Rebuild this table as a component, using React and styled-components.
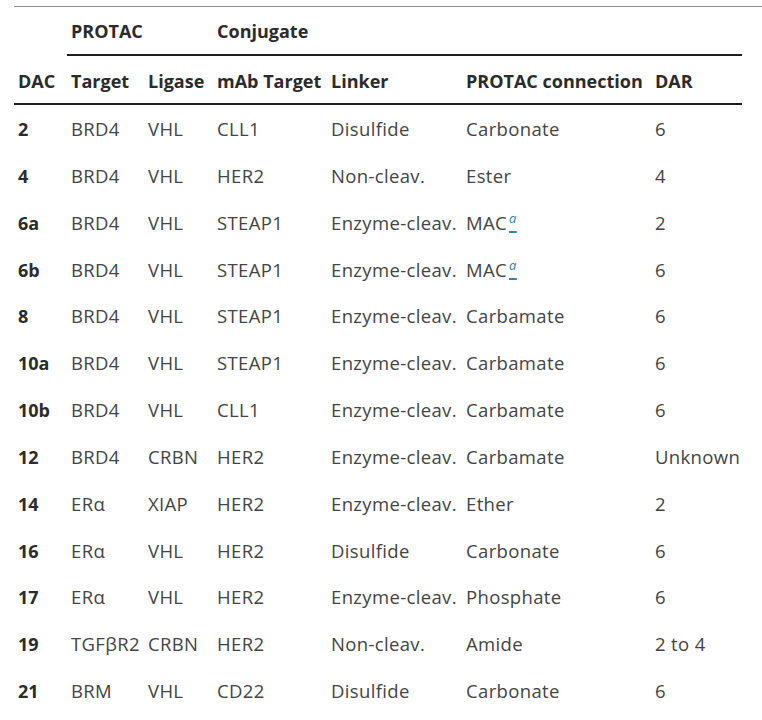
import React from "react";
import styled, { createGlobalStyle } from "styled-components";

const Global = createGlobalStyle`
  html, body { margin: 0; padding: 0; background: #fff; }
  body { font-family: "Open Sans", "Noto Sans", sans-serif; }
`;

const Wrap = styled.div`
  margin: 6px 0 0 14px;
  border-top: 1px solid #8c8c8c;
`;

const Table = styled.table`
  border-collapse: collapse;
  table-layout: fixed;
  width: 728px;
  color: #474747;
`;

const Th = styled.th`
  text-align: left;
  font-size: 18px;
  font-weight: 700;
  color: #2b2b2b;
  padding: 12px 0 10px 4px;
  line-height: 25px;
  white-space: nowrap;
  border-bottom: ${(p) => (p.$rule ? "2px solid #1f1f1f" : "none")};
`;

const ColTh = styled(Th)`
  padding: 13px 0 9px 4px;
`;

const GroupRow = styled.tr``;

const HeadRow = styled.tr`
  border-bottom: 2px solid #1f1f1f;
`;

const Td = styled.td`
  padding: 12px 0 10px 4px;
  line-height: 24.85px;
  white-space: nowrap;
  font-size: ${(p) => (p.$bold ? "18px" : "18.5px")};
  letter-spacing: ${(p) => (p.$bold ? "0" : "0.35px")};
  font-weight: ${(p) => (p.$bold ? 700 : 400)};
  color: ${(p) => (p.$bold ? "#2b2b2b" : "#444")};
`;

const Note = styled.a`
  color: #2a86b5;
  text-decoration: underline;
  text-decoration-thickness: 1.5px;
  margin-left: 2px;
`;

const Sup = styled.sup`
  font-style: italic;
  font-size: 13px;
  line-height: 0;
  vertical-align: 7px;
`;

const widths = [53, 77, 69, 114, 135, 189, 91];

const rows = [
  ["2", "BRD4", "VHL", "CLL1", "Disulfide", "Carbonate", "6"],
  ["4", "BRD4", "VHL", "HER2", "Non-cleav.", "Ester", "4"],
  ["6a", "BRD4", "VHL", "STEAP1", "Enzyme-cleav.", "MAC*", "2"],
  ["6b", "BRD4", "VHL", "STEAP1", "Enzyme-cleav.", "MAC*", "6"],
  ["8", "BRD4", "VHL", "STEAP1", "Enzyme-cleav.", "Carbamate", "6"],
  ["10a", "BRD4", "VHL", "STEAP1", "Enzyme-cleav.", "Carbamate", "6"],
  ["10b", "BRD4", "VHL", "CLL1", "Enzyme-cleav.", "Carbamate", "6"],
  ["12", "BRD4", "CRBN", "HER2", "Enzyme-cleav.", "Carbamate", "Unknown"],
  ["14", "ERα", "XIAP", "HER2", "Enzyme-cleav.", "Ether", "2"],
  ["16", "ERα", "VHL", "HER2", "Disulfide", "Carbonate", "6"],
  ["17", "ERα", "VHL", "HER2", "Enzyme-cleav.", "Phosphate", "6"],
  ["19", "TGFβR2", "CRBN", "HER2", "Non-cleav.", "Amide", "2 to 4"],
  ["21", "BRM", "VHL", "CD22", "Disulfide", "Carbonate", "6"],
];

export default function App() {
  return (
    <>
      <Global />
      <Wrap>
        <Table>
          <colgroup>
            {widths.map((w, i) => (
              <col key={i} style={{ width: w }} />
            ))}
          </colgroup>
          <thead>
            <GroupRow>
              <Th />
              <Th colSpan={2} $rule>PROTAC</Th>
              <Th colSpan={4} $rule>Conjugate</Th>
              <Th $rule />
            </GroupRow>
            <HeadRow>
              <ColTh>DAC</ColTh>
              <ColTh>Target</ColTh>
              <ColTh>Ligase</ColTh>
              <ColTh>mAb Target</ColTh>
              <ColTh>Linker</ColTh>
              <ColTh>PROTAC connection</ColTh>
              <ColTh>DAR</ColTh>
            </HeadRow>
          </thead>
          <tbody>
            {rows.map((r) => (
              <tr key={r[0]}>
                {r.map((c, i) => (
                  <Td key={i} $bold={i === 0}>
                    {c === "MAC*" ? (
                      <>
                        MAC
                        <Note href="#">
                          <Sup>a</Sup>
                        </Note>
                      </>
                    ) : (
                      c
                    )}
                  </Td>
                ))}
              </tr>
            ))}
          </tbody>
        </Table>
      </Wrap>
    </>
  );
}
